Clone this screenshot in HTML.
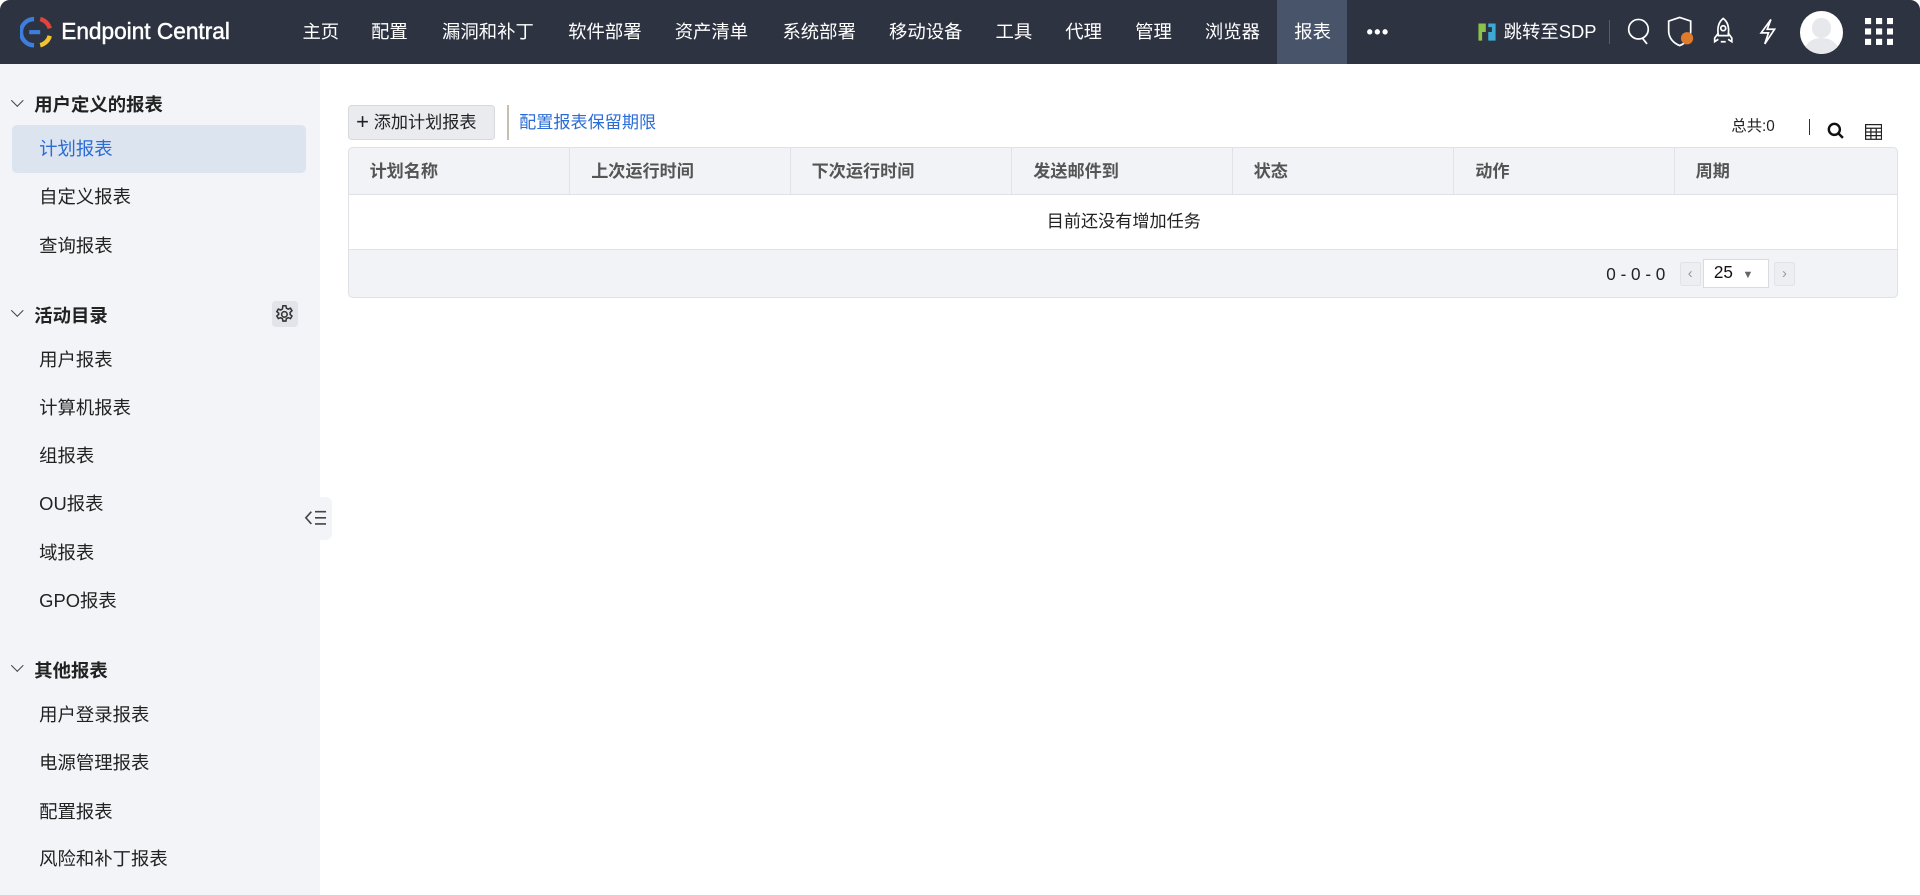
<!DOCTYPE html>
<html><head><meta charset="utf-8"><style>
*{margin:0;padding:0;box-sizing:border-box}
html,body{width:1920px;height:895px;overflow:hidden;background:#fff}
#w{zoom:1.22449;width:1568px;height:731px;position:relative;font-family:"Liberation Sans","Noto Sans CJK SC",sans-serif;color:#222}
.a{position:absolute;white-space:nowrap}
#hd{position:absolute;left:0;top:0;width:1568px;height:52px;background:#2d3341;border-radius:8px 8px 0 0}
.nv{position:absolute;top:0;height:52px;line-height:52px;color:#fff;font-size:15px}
#sb{position:absolute;left:0;top:52px;width:261px;height:679px;background:#f3f4f8}
.sec{position:absolute;left:28px;font-size:15px;font-weight:bold;color:#222;line-height:20px}
.chev{position:absolute;left:11px;width:7px;height:7px;border-right:1.2px solid #444;border-bottom:1.2px solid #444;transform:rotate(45deg)}
.it{position:absolute;left:32px;font-size:15px;color:#222;line-height:20px}
.th{position:absolute;top:0;height:38px;line-height:38px;font-size:14px;font-weight:bold;color:#555;padding-left:17px;border-right:1px solid #e0e2e8}
</style></head><body><div id="w">
<div id="hd">
<svg class="a" style="left:16px;top:12px" width="28" height="28" viewBox="0 0 28 28">
<path d="M11.5 3.3A10.6 10.6 0 0 0 11.5 24.7" stroke="#3d7ddb" stroke-width="3.6" fill="none"/>
<path d="M16.5 3.3A10.6 10.6 0 0 1 24.3 11" stroke="#e0443a" stroke-width="3.6" fill="none"/>
<path d="M24.3 17A10.6 10.6 0 0 1 16.5 24.7" stroke="#f2c230" stroke-width="3.6" fill="none"/>
<path d="M7.5 14H16.5" stroke="#3d7ddb" stroke-width="3.4"/>
</svg>
<div class="nv" style="left:50px;font-size:18.5px;font-weight:normal;-webkit-text-stroke:0.4px #fff">Endpoint Central</div>
<div class="nv" style="left:247px">主页</div>
<div class="nv" style="left:303px">配置</div>
<div class="nv" style="left:361px">漏洞和补丁</div>
<div class="nv" style="left:464px">软件部署</div>
<div class="nv" style="left:551px">资产清单</div>
<div class="nv" style="left:639px">系统部署</div>
<div class="nv" style="left:726px">移动设备</div>
<div class="nv" style="left:813px">工具</div>
<div class="nv" style="left:870px">代理</div>
<div class="nv" style="left:927px">管理</div>
<div class="nv" style="left:984px">浏览器</div>
<div class="a" style="left:1043px;top:0;width:57px;height:52px;background:#48546a"></div>
<div class="nv" style="left:1057px">报表</div>
<div class="nv" style="left:1116px;font-weight:bold;letter-spacing:1px">•••</div>
<svg class="a" style="left:1205px;top:17px" width="18" height="18" viewBox="0 0 18 18"><path d="M2 2h6v7H5v7H2z" fill="#8bc34a"/><path d="M10 2h6v14h-6V9h3V5h-3z" fill="#3fa9d6"/></svg>
<div class="nv" style="left:1228px;font-size:15px">跳转至SDP</div>
<div class="a" style="left:1314px;top:16px;width:1px;height:20px;background:#555c6b"></div>
<svg class="a" style="left:1327px;top:14px" width="22" height="24" viewBox="0 0 22 24" fill="none" stroke="#fff" stroke-width="1.4"><circle cx="11" cy="10" r="8"/><path d="M14 17l4 5"/></svg>
<svg class="a" style="left:1360px;top:12px" width="26" height="28" viewBox="0 0 26 28" fill="none" stroke="#fff" stroke-width="1.4"><path d="M12 2l9 3v8c0 6-4 10-9 12-5-2-9-6-9-12V5z"/><circle cx="18" cy="19" r="5" fill="#e07a2c" stroke="none"/></svg>
<svg class="a" style="left:1397px;top:13px" width="20" height="26" viewBox="0 0 20 26" fill="none" stroke="#fff" stroke-width="1.4"><path d="M10 2c4 3 5 8 4 14H6C5 10 6 5 10 2z"/><circle cx="10" cy="10" r="2"/><path d="M6 14l-3 4v3l3-2M14 14l3 4v3l-3-2M8 21h4"/></svg>
<svg class="a" style="left:1433px;top:14px" width="20" height="24" viewBox="0 0 20 24" fill="none" stroke="#fff" stroke-width="1.4"><path d="M13 2L5 13h6l-3 9 8-12h-6l3-8z"/></svg>
<div class="a" style="left:1470px;top:9px;width:35px;height:35px;border-radius:50%;background:#fff;overflow:hidden"><div class="a" style="left:10px;top:6px;width:15px;height:16px;border-radius:50%;background:#e6e8ec"></div><div class="a" style="left:4px;top:22px;width:27px;height:20px;border-radius:50%;background:#e6e8ec"></div></div>
<svg class="a" style="left:1523px;top:15px" width="23" height="22" viewBox="0 0 23 22" fill="#fff"><rect x="0" y="0" width="5" height="5"/><rect x="9" y="0" width="5" height="5"/><rect x="18" y="0" width="5" height="5"/><rect x="0" y="8.5" width="5" height="5"/><rect x="9" y="8.5" width="5" height="5"/><rect x="18" y="8.5" width="5" height="5"/><rect x="0" y="17" width="5" height="5"/><rect x="9" y="17" width="5" height="5"/><rect x="18" y="17" width="5" height="5"/></svg>
</div>
<div id="sb">
<div class="chev" style="top:26px"></div><div class="sec" style="top:24px">用户定义的报表</div>
<div class="a" style="left:10px;top:50px;width:240px;height:39px;background:#dce4f0;border-radius:4px"></div>
<div class="it" style="top:60px;color:#2b6cd6">计划报表</div>
<div class="it" style="top:99px">自定义报表</div>
<div class="it" style="top:139px">查询报表</div>
<div class="chev" style="top:198px"></div><div class="sec" style="top:196px">活动目录</div>
<div class="a" style="left:222px;top:194px;width:21px;height:21px;background:#e2e4e9;border-radius:3px"></div>
<svg class="a" style="left:224px;top:196px" width="17" height="17" viewBox="0 0 24 24" fill="none" stroke="#333" stroke-width="1.8"><circle cx="12" cy="12" r="3.2"/><path d="M10.3 2h3.4l.6 2.8 2 1.1 2.7-1 1.7 2.9-2.1 1.9v2.3l2.1 1.9-1.7 2.9-2.7-1-2 1.1-.6 2.8h-3.4l-.6-2.8-2-1.1-2.7 1-1.7-2.9 2.1-1.9V10.7L3.3 8.8 5 5.9l2.7 1 2-1.1z"/></svg>
<div class="it" style="top:232px">用户报表</div>
<div class="it" style="top:271px">计算机报表</div>
<div class="it" style="top:311px">组报表</div>
<div class="it" style="top:350px">OU报表</div>
<div class="it" style="top:390px">域报表</div>
<div class="it" style="top:429px">GPO报表</div>
<div class="chev" style="top:488px"></div><div class="sec" style="top:486px">其他报表</div>
<div class="it" style="top:522px">用户登录报表</div>
<div class="it" style="top:561px">电源管理报表</div>
<div class="it" style="top:601px">配置报表</div>
<div class="it" style="top:640px">风险和补丁报表</div>
</div>
<div class="a" style="left:247px;top:406px;width:24px;height:35px;background:#f3f4f8;border-radius:0 5px 5px 0"></div>
<svg class="a" style="left:248px;top:415px" width="20" height="16" viewBox="0 0 20 16" fill="none" stroke="#444" stroke-width="1.3"><path d="M6 3L1.5 8 6 13M9 3h9M9 8h9M9 13h9"/></svg>

<div class="a" style="left:284px;top:86px;width:120px;height:28px;background:#e9ebef;border:1px solid #d6d9de;border-radius:3px;font-size:14px;line-height:26px;padding-left:6px;color:#222"><span style="font-size:18px;vertical-align:-1px">+</span> 添加计划报表</div>
<div class="a" style="left:414px;top:86px;width:1.5px;height:28px;background:#c8bfb0"></div>
<div class="a" style="left:424px;top:90px;font-size:14px;line-height:20px;color:#2b6cd6">配置报表保留期限</div>
<div class="a" style="left:1414px;top:95px;font-size:12.5px;line-height:18px;color:#222">总共:0</div>
<div class="a" style="left:1477px;top:97px;width:1px;height:13px;background:#333"></div>
<svg class="a" style="left:1492px;top:100px" width="14" height="14" viewBox="0 0 14 14" fill="none" stroke="#111" stroke-width="2"><circle cx="6" cy="6" r="4.5"/><path d="M9.3 9.3L13 13"/></svg>
<svg class="a" style="left:1523px;top:101px" width="14" height="13" viewBox="0 0 14 13" fill="none" stroke="#222" stroke-width="1"><rect x=".5" y=".5" width="13" height="12"/><path d="M.5 3.5h13M.5 6.5h13M.5 9.5h13M4.8 3.5v9M9.2 3.5v9"/></svg>

<div class="a" style="left:284px;top:120px;width:1266px;height:123px;border:1px solid #dfe1e7;border-radius:4px;background:#f2f3f7;overflow:hidden">
<div class="th" style="left:0;width:181px">计划名称</div>
<div class="th" style="left:181px;width:180px">上次运行时间</div>
<div class="th" style="left:361px;width:181px">下次运行时间</div>
<div class="th" style="left:542px;width:180px">发送邮件到</div>
<div class="th" style="left:722px;width:181px">状态</div>
<div class="th" style="left:903px;width:180px">动作</div>
<div class="th" style="left:1083px;width:182px;border-right:none">周期</div>
<div class="a" style="left:0;top:38px;width:1266px;height:45px;background:#fff;border-top:1px solid #dfe1e7;border-bottom:1px solid #dfe1e7;text-align:center;line-height:44px;font-size:14px;color:#222">目前还没有增加任务</div>
<div class="a" style="left:1027px;top:93px;font-size:14px;line-height:20px;color:#222">0 - 0 - 0</div>
<div class="a" style="left:1087px;top:93px;width:17px;height:20px;background:#eceef1;border:1px solid #e0e2e6;border-radius:2px;color:#999;font-size:12px;line-height:18px;text-align:center">‹</div>
<div class="a" style="left:1106px;top:91px;width:54px;height:23px;background:#fff;border:1px solid #d8dbe0;font-size:14px;line-height:21px;padding-left:8px;color:#111">25 <span style="font-size:9px;color:#666;margin-left:4px">▼</span></div>
<div class="a" style="left:1164px;top:93px;width:17px;height:20px;background:#eceef1;border:1px solid #e0e2e6;border-radius:2px;color:#999;font-size:12px;line-height:18px;text-align:center">›</div>
</div>
</div></body></html>
